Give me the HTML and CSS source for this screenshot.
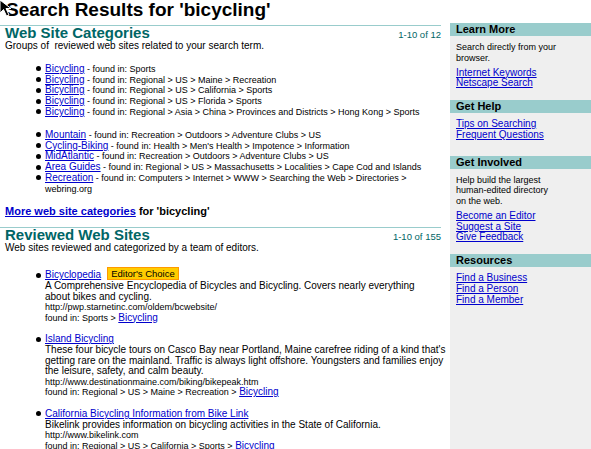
FILE: index.html
```html
<!DOCTYPE html>
<html lang="en">
<head>
<meta charset="utf-8">
<title>Search Results for 'bicycling'</title>
<link rel="stylesheet" href="styles.css">
</head>
<body>
<svg class="cursor" width="14" height="18" viewBox="0 0 14 18" aria-hidden="true"><polygon points="0,0 0,13 3.5,9.5 6.5,16 9,15 6,8.5 11,8.5" fill="#000" stroke="#fff" stroke-width="1"/></svg>
<h1 class="title">Search Results for 'bicycling'</h1>
<div class="layout">
  <main class="main">
    <section class="sec">
      <div class="sec-head">
        <h2 class="sec-title">Web Site Categories</h2>
        <span class="count">1-10 of 12</span>
      </div>
      <p class="sec-desc">Groups of &nbsp;reviewed web sites related to your search term.</p>
      <ul class="cats">
        <li><a href="#">Bicycling</a> - found in: Sports</li>
        <li><a href="#">Bicycling</a> - found in: Regional &gt; US &gt; Maine &gt; Recreation</li>
        <li><a href="#">Bicycling</a> - found in: Regional &gt; US &gt; California &gt; Sports</li>
        <li><a href="#">Bicycling</a> - found in: Regional &gt; US &gt; Florida &gt; Sports</li>
        <li><a href="#">Bicycling</a> - found in: Regional &gt; Asia &gt; China &gt; Provinces and Districts &gt; Hong Kong &gt; Sports</li>
      </ul>
      <ul class="cats">
        <li><a href="#">Mountain</a> - found in: Recreation &gt; Outdoors &gt; Adventure Clubs &gt; US</li>
        <li><a href="#">Cycling-Biking</a> - found in: Health &gt; Men's Health &gt; Impotence &gt; Information</li>
        <li><a href="#">MidAtlantic</a> - found in: Recreation &gt; Outdoors &gt; Adventure Clubs &gt; US</li>
        <li><a href="#">Area Guides</a> - found in: Regional &gt; US &gt; Massachusetts &gt; Localities &gt; Cape Cod and Islands</li>
        <li><a href="#">Recreation</a> - found in: Computers &gt; Internet &gt; WWW &gt; Searching the Web &gt; Directories &gt; webring.org</li>
      </ul>
      <p class="more"><a href="#">More web site categories</a> for 'bicycling'</p>
    </section>
    <section class="sec sec-sites">
      <div class="sec-head">
        <h2 class="sec-title">Reviewed Web Sites</h2>
        <span class="count">1-10 of 155</span>
      </div>
      <p class="sec-desc">Web sites reviewed and categorized by a team of editors.</p>
      <ul class="sites">
        <li class="site">
          <div class="site-head"><a href="#">Bicyclopedia</a><span class="badge">Editor's Choice</span></div>
          <div class="site-desc">A Comprehensive Encyclopedia of Bicycles and Bicycling. Covers nearly everything<br>about bikes and cycling.</div>
          <div class="site-meta">http://pwp.starnetinc.com/oldem/bcwebsite/</div>
          <div class="site-meta">found in: Sports &gt; <a href="#">Bicycling</a></div>
        </li>
        <li class="site">
          <div class="site-head"><a href="#">Island Bicycling</a></div>
          <div class="site-desc">These four bicycle tours on Casco Bay near Portland, Maine carefree riding of a kind that's<br>getting rare on the mainland. Traffic is always light offshore. Youngsters and families enjoy<br>the leisure, safety, and calm beauty.</div>
          <div class="site-meta">http://www.destinationmaine.com/biking/bikepeak.htm</div>
          <div class="site-meta">found in: Regional &gt; US &gt; Maine &gt; Recreation &gt; <a href="#">Bicycling</a></div>
        </li>
        <li class="site">
          <div class="site-head"><a href="#">California Bicycling Information from Bike Link</a></div>
          <div class="site-desc">Bikelink provides information on bicycling activities in the State of California.</div>
          <div class="site-meta">http://www.bikelink.com</div>
          <div class="site-meta">found in: Regional &gt; US &gt; California &gt; Sports &gt; <a href="#">Bicycling</a></div>
        </li>
      </ul>
    </section>
  </main>
  <aside class="side">
    <div class="side-box">
      <div class="side-head">Learn More</div>
      <div class="side-body">
        <p class="side-text">Search directly from your browser.</p>
        <div class="side-links">
          <a href="#">Internet Keywords</a>
          <a href="#">Netscape Search</a>
        </div>
      </div>
    </div>
    <div class="side-box">
      <div class="side-head">Get Help</div>
      <div class="side-body side-body-tall">
        <div class="side-links">
          <a href="#">Tips on Searching</a>
          <a href="#">Frequent Questions</a>
        </div>
      </div>
    </div>
    <div class="side-box">
      <div class="side-head">Get Involved</div>
      <div class="side-body">
        <p class="side-text">Help build the largest human-edited directory on the web.</p>
        <div class="side-links">
          <a href="#">Become an Editor</a>
          <a href="#">Suggest a Site</a>
          <a href="#">Give Feedback</a>
        </div>
      </div>
    </div>
    <div class="side-box">
      <div class="side-head">Resources</div>
      <div class="side-body">
        <div class="side-links">
          <a href="#">Find a Business</a>
          <a href="#">Find a Person</a>
          <a href="#">Find a Member</a>
        </div>
      </div>
    </div>
  </aside>
</div>
</body>
</html>
```

FILE: styles.css
```css
* { box-sizing: border-box; }

html, body {
  margin: 0;
  padding: 0;
  background: #fff;
}

body {
  font-family: "Liberation Sans", Arial, Helvetica, sans-serif;
  color: #000;
  overflow: hidden;
}

a { color: #0000cc; text-decoration: underline; }

.cursor {
  position: absolute;
  left: 0;
  top: 0;
  z-index: 5;
}

.title {
  margin: 0;
  height: 23px;
  padding-left: 6px;
  font-size: 19px;
  line-height: 20px;
  font-weight: bold;
}

.layout {
  display: flex;
  align-items: stretch;
}

.main {
  width: 441px;
  flex: none;
  padding-top: 2px;
}

.sec {
  border-top: 1px solid #99cccc;
}

.sec-sites {
  margin-top: 10px;
}

.sec-head {
  display: flex;
  justify-content: space-between;
  align-items: baseline;
  padding-left: 5px;
}

.sec-title {
  margin: 0;
  font-size: 15px;
  line-height: 13px;
  font-weight: bold;
  color: #006666;
}

.count {
  font-size: 9.5px;
  line-height: 13px;
  color: #006666;
}

.sec-desc {
  margin: 0;
  padding-left: 5px;
  font-size: 10px;
  line-height: 10.8px;
}

.cats {
  list-style: none;
  margin: 12px 0 0;
  padding: 0 0 0 45px;
}

.cats li {
  font-size: 9px;
  line-height: 10.8px;
}

.cats a { font-size: 10px; }

.cats li::before,
.site-head::before {
  content: "";
  display: inline-block;
  width: 5px;
  height: 5px;
  border-radius: 50%;
  background: #000;
  margin-left: -9px;
  margin-right: 4px;
  vertical-align: 0.5px;
}

.more {
  margin: 10px 0 0;
  padding-left: 5px;
  font-size: 11px;
  line-height: 12px;
  font-weight: bold;
}

.sites {
  list-style: none;
  margin: 14px 0 0;
  padding: 0 0 0 45px;
}

.site + .site { margin-top: 9.4px; }

.site-head {
  font-size: 10px;
  line-height: 13px;
}

.badge {
  display: inline-block;
  margin-left: 6px;
  padding: 0 3px;
  background: #ffcc00;
  border: 1px solid #ff9900;
  color: #000;
  font-size: 9.5px;
  line-height: 11px;
  vertical-align: 1px;
}

.site-desc {
  font-size: 10px;
  line-height: 10.4px;
  white-space: nowrap;
}

.site-meta {
  font-size: 9px;
  line-height: 10.4px;
}

.site-meta a {
  font-size: 10px;
  line-height: 0;
}

.side {
  width: 141px;
  flex: none;
  margin-left: 9px;
  background: #efefef;
}

.side-head {
  height: 13px;
  padding-left: 6px;
  background: #99cccc;
  font-size: 11px;
  line-height: 13px;
  font-weight: bold;
}

.side-body {
  padding: 6px 33px 11px 6px;
}

.side-body-tall {
  padding-bottom: 15px;
}

.side-text {
  margin: 0 0 4px;
  font-size: 9px;
  line-height: 10.75px;
}

.side-links {
  font-size: 10px;
  line-height: 10.75px;
}

.side-links a {
  display: block;
  width: max-content;
}
```
